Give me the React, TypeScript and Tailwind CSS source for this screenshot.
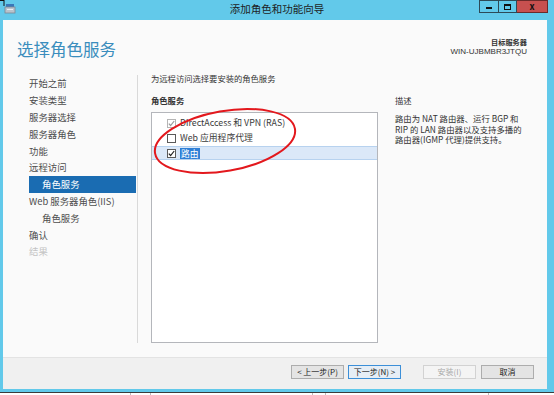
import React from 'react'

const navItems = [
  { label: '开始之前', level: 0 },
  { label: '安装类型', level: 0 },
  { label: '服务器选择', level: 0 },
  { label: '服务器角色', level: 0 },
  { label: '功能', level: 0 },
  { label: '远程访问', level: 0 },
  { label: '角色服务', level: 1, active: true },
  { label: 'Web 服务器角色(IIS)', level: 0 },
  { label: '角色服务', level: 1 },
  { label: '确认', level: 0 },
  { label: '结果', level: 0, disabled: true },
]

const services = [
  { label: 'DirectAccess 和 VPN (RAS)', checked: true, locked: true },
  { label: 'Web 应用程序代理', checked: false },
  { label: '路由', checked: true, selected: true },
]

const CheckBox = ({ checked, locked }: { checked: boolean; locked?: boolean }) => (
  <span
    className={`w-[9px] h-[9px] border bg-white flex items-center justify-center shrink-0 ${
      locked ? 'border-[#b5b5b5]' : 'border-[#5a5a5a]'
    }`}
  >
    {checked && (
      <svg width="7" height="7" viewBox="0 0 7 7">
        <path d="M0.8 3.6 L2.6 5.5 L6.2 1" fill="none" stroke={locked ? '#9a9a9a' : '#222'} strokeWidth="1.2" />
      </svg>
    )}
  </span>
)

const WizardButton = ({ children, variant }: { children: React.ReactNode; variant?: 'default' | 'disabled' }) => {
  const style =
    variant === 'default'
      ? 'border-[#3c8fd8] bg-[#e6eef6] text-[#222]'
      : variant === 'disabled'
        ? 'border-[#d2d2d2] bg-[#f4f4f4] text-[#a8a8a8]'
        : 'border-[#adadad] bg-[#e4e4e4] text-[#222]'
  return (
    <div className={`h-[14px] w-[53px] border flex items-center justify-center text-[8px] leading-none ${style}`}>
      {children}
    </div>
  )
}

export default function App() {
  return (
    <div className="w-[554px] h-[395px] bg-white overflow-hidden relative font-['Noto_Sans_CJK_SC','Noto_Sans',sans-serif]">
      {/* Window frame */}
      <div className="h-[392px] bg-[#62c9ea] flex flex-col pl-[3px] pr-[7px] pb-[3px]">
        {/* Title bar */}
        <div className="h-[20px] -ml-[3px] -mr-[7px] grid grid-cols-[1fr_auto_1fr]">
          <div className="relative">
            <svg width="20" height="16" viewBox="0 0 20 16" className="absolute left-0 top-0">
              <path d="M0 0.5 H4 M4 0 V6" stroke="#111" strokeWidth="1" fill="none" />
              <rect x="6" y="4" width="8" height="3" fill="#3a77b8" />
              <rect x="5" y="7" width="10" height="6" fill="#b9c3cc" stroke="#7a8794" strokeWidth="0.8" />
              <rect x="7" y="9" width="6" height="1" fill="#e8eef3" />
            </svg>
          </div>
          <div className="pt-[1px] text-[10.5px] leading-[16px] text-[#1e1e1e]">添加角色和功能向导</div>
          <div className="flex justify-end pr-[6px] items-start">
            <div className="w-[20px] h-[13px] border border-[#2d4a57] flex items-end justify-center pb-[3px]">
              <div className="w-[6px] h-[2px] bg-[#111]" />
            </div>
            <div className="w-[18px] h-[13px] border border-l-0 border-[#2d4a57] flex items-center justify-center">
              <div className="w-[7px] h-[6px] border-[1.5px] border-t-[2px] border-[#111]" />
            </div>
            <div className="w-[31px] h-[13px] border border-l-0 border-[#6b2a2a] bg-[#c7504f] flex items-center justify-center text-[9px] font-bold text-[#111] leading-none">
              x
            </div>
          </div>
        </div>

        {/* Client area */}
        <div className="flex-1 flex flex-col bg-[#fafafa]">
          {/* Header */}
          <div className="h-[52px] flex justify-between">
            <div className="pt-[18px] pl-[14px] text-[16.5px] leading-[22px] text-[#3a8dbd]">选择角色服务</div>
            <div className="pt-[17px] pr-[20px] flex flex-col items-end text-[#333]">
              <div className="h-[10px] text-[7.2px] leading-[10px] font-bold">目标服务器</div>
              <div className="h-[10px] text-[8px] leading-[10px] font-['Liberation_Sans',sans-serif]">WIN-UJBMBR3JTQU</div>
            </div>
          </div>

          {/* Body */}
          <div className="h-[285px] flex">
            {/* Left navigation */}
            <div className="pl-[26px] pt-[3px] pb-[14px] flex">
              <div className="w-[107px] flex flex-col">
                {navItems.map((item, i) => (
                  <div
                    key={i}
                    className={`h-[16.8px] flex items-center text-[9.4px] ${
                      item.level === 1 ? 'pl-[13px]' : 'pl-0'
                    } ${
                      item.active
                        ? 'bg-[#1a6cb2] text-white'
                        : item.disabled
                          ? 'text-[#c4c4c4]'
                          : 'text-[#4d4d4d]'
                    }`}
                  >
                    {item.label}
                  </div>
                ))}
              </div>
              <div className="w-[1px] bg-[#d9d9d9] ml-[1px]" />
            </div>

            {/* Content */}
            <div className="flex-1 pl-[13px] pr-[20px] pb-[14px] flex flex-col text-[#333]">
              <div className="h-[12px] text-[8.3px] leading-[12px]">为远程访问选择要安装的角色服务</div>
              <div className="flex-1 flex">
                <div className="w-[227px] flex flex-col">
                  <div className="mt-[10px] h-[12px] text-[8.3px] leading-[12px] font-bold">角色服务</div>
                  <div className="mt-[6px] flex-1 border border-[#b4b6bb] bg-white pt-[3px]">
                    {services.map((s, i) => (
                      <div
                        key={i}
                        className={`h-[14px] mb-[1px] flex items-center gap-[4px] pl-[15px] text-[8.8px] ${
                          s.selected ? 'bg-[#dbe8f8] border-y border-[#b7d2ef]' : ''
                        }`}
                      >
                        <CheckBox checked={s.checked} locked={s.locked} />
                        <span
                          className={
                            s.selected
                              ? 'bg-[#2f7fd6] text-white leading-[11px] px-[1px]'
                              : 'text-[#3a3a3a]'
                          }
                        >
                          {s.label}
                        </span>
                      </div>
                    ))}
                  </div>
                </div>
                <div className="ml-[17px] flex-1">
                  <div className="mt-[10px] h-[12px] text-[8.3px] leading-[12px]">描述</div>
                  <div className="mt-[7px] text-[8.4px] leading-[10.5px] text-[#333]">
                    路由为 NAT 路由器、运行 BGP 和 RIP 的 LAN 路由器以及支持多播的路由器(IGMP 代理)提供支持。
                  </div>
                </div>
              </div>
            </div>
          </div>

          {/* Footer */}
          <div className="flex-1 border-t border-[#e3e3e3] bg-[#f0f0f0] flex justify-end items-start pt-[7px] pr-[13px]">
            <WizardButton>&lt; 上一步(P)</WizardButton>
            <div className="ml-[4px]">
              <WizardButton variant="default">下一步(N) &gt;</WizardButton>
            </div>
            <div className="ml-[22px]">
              <WizardButton variant="disabled">安装(I)</WizardButton>
            </div>
            <div className="ml-[5px]">
              <WizardButton>取消</WizardButton>
            </div>
          </div>
        </div>
      </div>
      <div className="h-[1px] bg-[#3b3b3b]" />
      <div className="h-[2px] flex">
        <div className="w-[130px]" />
        <div className="w-[1px] bg-[#bbb]" />
        <div className="w-[19px]" />
        <div className="w-[1px] bg-[#bbb]" />
        <div className="w-[161px]" />
        <div className="w-[1px] bg-[#bbb]" />
        <div className="w-[12px]" />
        <div className="w-[1px] bg-[#bbb]" />
        <div className="w-[162px]" />
        <div className="w-[1px] bg-[#bbb]" />
      </div>

      {/* Red annotation ellipse */}
      <svg className="absolute left-[145px] top-[100px] pointer-events-none" width="160" height="85" viewBox="145 100 160 85">
        <ellipse cx="225" cy="141" rx="71" ry="30" transform="rotate(-10 225 141)" fill="none" stroke="#e3181d" strokeWidth="2" />
      </svg>
    </div>
  )
}
